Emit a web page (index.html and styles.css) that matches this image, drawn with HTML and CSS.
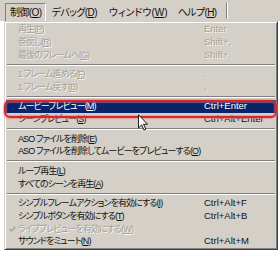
FILE: index.html
```html
<!DOCTYPE html>
<html lang="ja">
<head>
    <meta charset="UTF-8">
    <title>制御メニュー</title>
    <link rel="stylesheet" href="styles.css">
</head>
<body>
<div class="screen">
    <div class="menubar">
        <span class="bar_item bar_pressed">制御(<u>O</u>)</span>
        <span class="bar_item">デバッグ(<u>D</u>)</span>
        <span class="bar_item bar_wide">ウィンドウ(<u>W</u>)</span>
        <span class="bar_item">ヘルプ(<u>H</u>)</span>
        <span class="bar_sep"></span>
    </div>

    <div class="dropdown">
        <div class="item off"><span class="chk"></span><span class="label">再生(<u>P</u>)</span><span>Enter</span></div>
        <div class="item off"><span class="chk"></span><span class="label">巻戻し(<u>R</u>)</span><span>Shift+,</span></div>
        <div class="item off"><span class="chk"></span><span class="label">最後のフレームへ(<u>G</u>)</span><span>Shift+.</span></div>
        <div class="sep"></div>
        <div class="item off"><span class="chk"></span><span class="label">1 フレーム進める(<u>F</u>)</span><span>.</span></div>
        <div class="item off"><span class="chk"></span><span class="label">1 フレーム戻す(<u>B</u>)</span><span>,</span></div>
        <div class="sep"></div>
        <div class="item item_select"><span class="chk"></span><span class="label">ムービープレビュー(<u>M</u>)</span><span>Ctrl+Enter</span></div>
        <div class="item"><span class="chk"></span><span class="label">シーンプレビュー(<u>S</u>)</span><span>Ctrl+Alt+Enter</span></div>
        <div class="sep"></div>
        <div class="item"><span class="chk"></span><span class="label">ASO ファイルを削除(<u>E</u>)</span><span></span></div>
        <div class="item"><span class="chk"></span><span class="label">ASO ファイルを削除してムービーをプレビューする(<u>O</u>)</span><span></span></div>
        <div class="sep"></div>
        <div class="item"><span class="chk"></span><span class="label">ループ再生(<u>L</u>)</span><span></span></div>
        <div class="item"><span class="chk"></span><span class="label">すべてのシーンを再生(<u>A</u>)</span><span></span></div>
        <div class="sep"></div>
        <div class="item"><span class="chk"></span><span class="label">シンプルフレームアクションを有効にする(<u>I</u>)</span><span>Ctrl+Alt+F</span></div>
        <div class="item"><span class="chk"></span><span class="label">シンプルボタンを有効にする(<u>T</u>)</span><span>Ctrl+Alt+B</span></div>
        <div class="item off">
            <span class="chk">
                <svg width="7" height="6" viewBox="0 0 7 6"><path d="M0.7 3 L2.6 4.9 L6.3 1" fill="none" stroke="#a4a098" stroke-width="1.4"/></svg>
            </span>
            <span class="label">ライブプレビューを有効にする(<u>W</u>)</span><span></span>
        </div>
        <div class="item"><span class="chk"></span><span class="label">サウンドをミュート(<u>N</u>)</span><span>Ctrl+Alt+M</span></div>
    </div>

    <!-- 赤い枠とマウスカーソル -->
    <div class="mark"></div>
    <svg class="cursor" width="10" height="17" viewBox="0 0 11 18">
        <path d="M0.5 0.5 L0.5 15 L4 11.7 L6.6 17.3 L8.6 16.4 L6.1 10.9 L10.5 10.9 Z" fill="#fff" stroke="#000" stroke-width="1"/>
    </svg>
</div>
</body>
</html>
```

FILE: styles.css
```css
*{
    margin: 0;
    padding: 0;
    box-sizing: border-box;
}
body{
    background-color: #fff;
    font-family: "Liberation Sans", "Noto Sans CJK JP", sans-serif;
    font-feature-settings: "palt";
    color: #111;
}
u{
    text-decoration-thickness: 1px;
    text-underline-offset: 1px;
}
.screen{
    position: relative;
    width: 280px;
    height: 264px;
    overflow: hidden;
}

/* メニューバー */
.menubar{
    display: flex;
    height: 21px;
    padding: 3px 0 0 5px;
    background-color: #d4d0c8;
    font-size: 10px;
    letter-spacing: -0.6px;
}
.bar_item{
    height: 18px;
    line-height: 17px;
    padding: 0 4px;
    border: 1px solid transparent;
    border-bottom: none;
    white-space: nowrap;
}
.bar_wide{
    margin-left: 2px;
    letter-spacing: 0;
}
.bar_pressed{
    border-color: #808080 #fff #fff #808080;
}
.bar_sep{
    width: 2px;
    height: 16px;
    margin-left: 4px;
    border-left: 1px solid #808080;
    border-right: 1px solid #fff;
}

/* ドロップダウン */
.dropdown{
    width: 274px;
    margin-left: 4px;
    padding: 1px;
    background-color: #d4d0c8;
    border: 1px solid;
    border-color: #d4d0c8 #404040 #404040 #d4d0c8;
    box-shadow: inset 1px 1px #fff, inset -1px -1px #808080;
    font-size: 9.5px;
}
.item{
    display: grid;
    grid-template-columns: 12px 1fr 72px;
    height: 12.75px;
    line-height: 12.75px;
    white-space: nowrap;
}
.label{
    font-size: 9px;
    letter-spacing: -0.9px;
}
.chk{
    display: flex;
    align-items: center;
    justify-content: center;
}
.off{
    color: #a4a098;
    text-shadow: 1px 1px 0 rgba(255, 255, 255, 0.8);
}
.item_select{
    background-color: #0a246a;
    color: #fff;
}
.sep{
    height: 2px;
    margin: 2.375px 1px;
    border-top: 1px solid #808080;
    border-bottom: 1px solid #fff;
}

/* 重ねるもの */
.mark{
    position: absolute;
    left: 4px;
    top: 100px;
    width: 273px;
    height: 18px;
    border: 2px solid #d9262b;
    border-radius: 6px;
    box-shadow: 0 0 1px 1px rgba(240, 120, 120, 0.6), inset 0 0 1px 1px rgba(240, 120, 120, 0.5);
}
.cursor{
    position: absolute;
    left: 138px;
    top: 114px;
}
```
